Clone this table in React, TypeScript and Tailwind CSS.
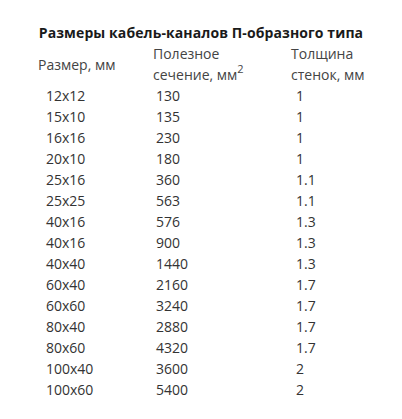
const rows: [string, string, string][] = [
  ["12x12", "130", "1"],
  ["15x10", "135", "1"],
  ["16x16", "230", "1"],
  ["20x10", "180", "1"],
  ["25x16", "360", "1.1"],
  ["25x25", "563", "1.1"],
  ["40x16", "576", "1.3"],
  ["40x16", "900", "1.3"],
  ["40x40", "1440", "1.3"],
  ["60x40", "2160", "1.7"],
  ["60x60", "3240", "1.7"],
  ["80x40", "2880", "1.7"],
  ["80x60", "4320", "1.7"],
  ["100x40", "3600", "2"],
  ["100x60", "5400", "2"],
];

export default function App() {
  return (
    <div
      className="w-[402px] h-[419px] bg-white pt-[22px] text-[14px] leading-[21px] text-[#333]"
      style={{ fontFamily: '"Open Sans", "Liberation Sans", sans-serif' }}
    >
      <h2 className="text-center font-bold text-[#1a1a1a] tracking-[0.1px]">
        Размеры кабель-каналов П-образного типа
      </h2>
      <div className="ml-[38px] grid grid-cols-[115px_138px_1fr]">
        <div className="flex items-center text-[#444]">Размер, мм</div>
        <div className="text-[#444]">
          Полезное
          <br />
          сечение, мм<sup className="text-[11px] top-[-0.6em]">2</sup>
        </div>
        <div className="text-[#444]">
          Толщина
          <br />
          стенок, мм
        </div>
        {rows.map(([size, area, wall], i) => (
          <div key={i} className="contents">
            <div className="pl-[8px]">{size}</div>
            <div className="pl-[3px]">{area}</div>
            <div className="pl-[5px]">{wall}</div>
          </div>
        ))}
      </div>
    </div>
  );
}
